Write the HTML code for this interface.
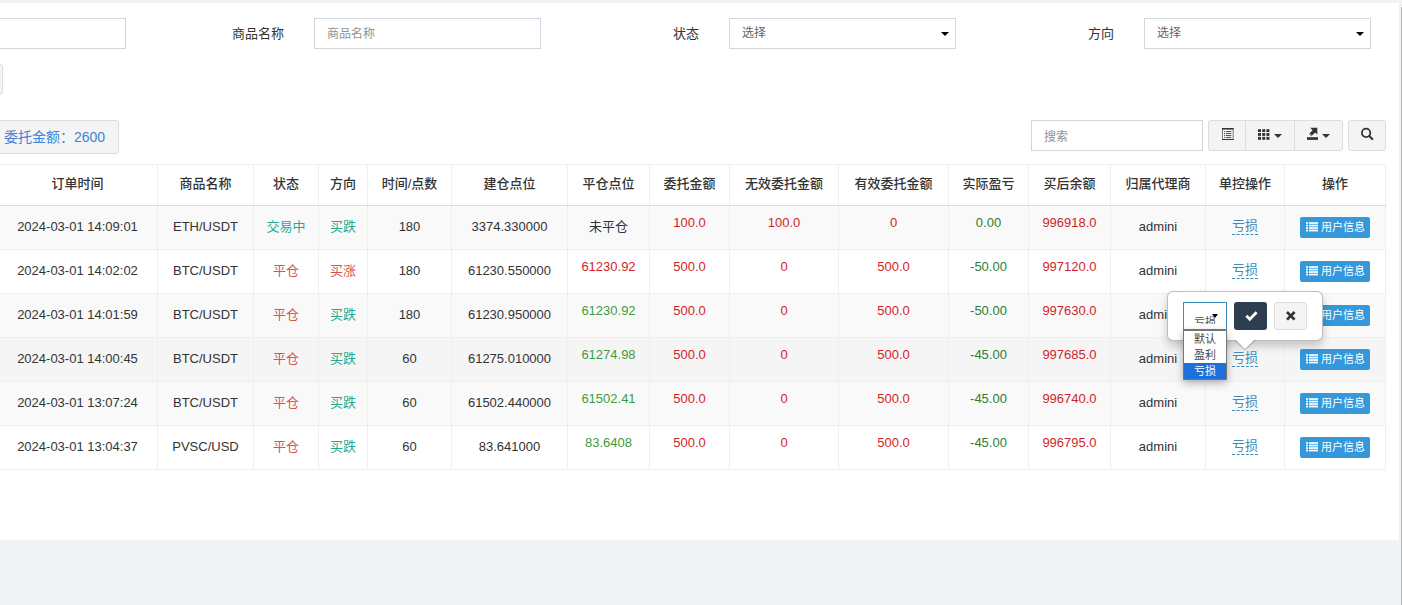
<!DOCTYPE html>
<html lang="zh-CN">
<head>
<meta charset="utf-8">
<title>订单列表</title>
<style>
*{box-sizing:border-box;margin:0;padding:0}
html,body{width:1402px;height:605px;overflow:hidden}
body{background:#eff3f6;font-family:"Liberation Sans","Noto Sans CJK SC",sans-serif;font-size:13px;color:#333;position:relative}
.abs{position:absolute}
#panel{left:0;top:3px;width:1399px;height:537px;background:#fff}
#sbtrack{left:1399px;top:0;width:3px;height:605px;background:#f1f1f1}
#sbthumb{left:1401px;top:7px;width:2px;height:598px;background:#b4b4b4}
.inp{height:31px;border:1px solid #d2d6de;background:#fff;border-radius:0;font-size:12px;color:#929292;line-height:29px;padding-left:12px}
.lbl{font-size:13px;line-height:20px;color:#333;white-space:nowrap}
.sel{color:#666}
.caret{position:absolute;width:0;height:0;border-left:3.5px solid transparent;border-right:3.5px solid transparent;border-top:4px solid #000}
.btn{background:#f4f4f4;border:1px solid #ddd;border-radius:3px}
/* table */
#tbl{left:-40px;top:164px;width:1425px;border-collapse:collapse;table-layout:fixed;font-size:13px}
#tbl th,#tbl td{border:1px solid #efefef;text-align:center;vertical-align:middle;white-space:nowrap;padding:0}
#tbl th{height:41px;padding-bottom:5px;font-weight:500;color:#333;border-bottom:1px solid #dcdcdc;font-size:13px}
#tbl td{height:44px;padding-bottom:2px;color:#333}
#tbl tr.odd td{background:#f9f9f9}
#tbl tr.hov td{background:#f5f5f5}
#tbl td.c{padding-bottom:5px}#tbl td.g{color:#1fa88e;padding-bottom:5px}#tbl td.r{color:#d9534f;padding-bottom:5px}
.up{display:block;position:relative;top:-4px}
.red{color:#d01f2a}.grn{color:#3c9d40}.dgrn{color:#2e7d32}
a.ed{color:#3c8dbc;border-bottom:1px dashed #3c8dbc;text-decoration:none;font-size:13px;line-height:16px;display:inline-block;position:relative;top:0}
.ub{display:inline-block;width:70px;height:21px;background:#3498db;border-radius:2px;color:#fff;font-size:11px;line-height:21px;vertical-align:middle;text-align:left;padding-left:21px;position:relative;top:1px}
.ub .li{position:absolute;left:6px;top:5px}

#pop{left:1167px;top:291px;width:156px;height:50px;background:#fff;border:1px solid rgba(0,0,0,.26);border-radius:6px;box-shadow:0 5px 10px rgba(0,0,0,.2)}
#poparrow{position:absolute;left:66px;top:48px;width:0;height:0;border-left:11px solid transparent;border-right:11px solid transparent;border-top:11px solid rgba(0,0,0,.16)}
#poparrow:after{content:"";position:absolute;left:-10px;top:-12px;width:0;height:0;border-left:10px solid transparent;border-right:10px solid transparent;border-top:10px solid #fff}
#psel{left:15px;top:10px;width:44px;height:28px;border:1px solid #3c8dbc;background:#fff;font-size:11px;color:#555}
#pclip{position:absolute;left:0;top:0;width:42px;height:21px;overflow:hidden}
#pseltxt{position:absolute;left:10px;top:10.5px;line-height:16px;white-space:nowrap}
#pok{left:66px;top:10px;width:33px;height:28px;background:#2c3e50;border-radius:3px}
#pcancel{left:106px;top:10px;width:33px;height:28px;background:#f4f4f4;border:1px solid #ddd;border-radius:3px}
#ddl{left:1183px;top:330px;width:44px;height:50px;background:#fff;border:1px solid #767676;font-size:11px;color:#444;box-shadow:0 3px 8px rgba(0,0,0,.3)}
#ddl div{height:16px;line-height:17px;padding-left:10px;white-space:nowrap}
#ddl .hl{background:#1e6fd9;color:#fff}
</style>
</head>
<body>
<div id="panel" class="abs"></div>
<div id="sbtrack" class="abs"></div>
<div id="sbthumb" class="abs"></div>

<!-- filter row -->
<div class="abs inp" style="left:-100px;top:18px;width:226px"></div>
<div class="abs lbl" style="left:232px;top:23.6px">商品名称</div>
<div class="abs inp" style="left:314px;top:18px;width:227px;line-height:31px">商品名称</div>
<div class="abs lbl" style="left:673px;top:23.6px">状态</div>
<div class="abs inp sel" style="left:729px;top:18px;width:227px">选择<i class="caret" style="right:6.5px;top:13px;border-left-width:4px;border-right-width:4px;border-top-width:4.5px"></i></div>
<div class="abs lbl" style="left:1088px;top:23.6px">方向</div>
<div class="abs inp sel" style="left:1144px;top:18px;width:227px">选择<i class="caret" style="right:6.5px;top:13px;border-left-width:4px;border-right-width:4px;border-top-width:4.5px"></i></div>

<div class="abs btn" style="left:-40px;top:64px;width:43px;height:31px"></div>

<!-- toolbar -->
<div class="abs btn" style="left:-40px;top:120px;width:159px;height:34px;color:#3d85d8;font-size:14px;line-height:32px;padding-left:43px;white-space:nowrap">委托金额：2600</div>
<div class="abs inp" style="left:1031px;top:120px;width:172px;line-height:32px">搜索</div>
<div class="abs btn" style="left:1208px;top:120px;width:135px;height:31px"></div>
<div class="abs" style="left:1245px;top:120px;width:1px;height:31px;background:#ddd"></div>
<div class="abs" style="left:1294px;top:120px;width:1px;height:31px;background:#ddd"></div>
<div class="abs btn" style="left:1348px;top:120px;width:38px;height:31px"></div>


<!-- toolbar icons -->
<svg class="abs" style="left:1222px;top:128px" width="12" height="12" viewBox="0 0 12 12"><rect x="0.4" y="0.4" width="10.7" height="11.2" fill="#fdfdfd" stroke="#555" stroke-width="0.8"/><rect x="0" y="0" width="11.5" height="1.6" fill="#333"/><rect x="0" y="11" width="11.5" height="1" fill="#333"/><g fill="#333"><rect x="2" y="3.2" width="1" height="0.9"/><rect x="3.8" y="3.2" width="5.6" height="0.9"/><rect x="2" y="5.2" width="1" height="0.9"/><rect x="3.8" y="5.2" width="5.6" height="0.9"/><rect x="2" y="7.2" width="1" height="0.9"/><rect x="3.8" y="7.2" width="5.6" height="0.9"/><rect x="2" y="9.2" width="1" height="0.9"/><rect x="3.8" y="9.2" width="5.6" height="0.9"/></g></svg>
<svg class="abs" style="left:1258px;top:129px" width="12" height="11" viewBox="0 0 12 11"><g fill="#333"><rect x="0" y="0.2" width="3" height="2.8"/><rect x="4.2" y="0.2" width="3" height="2.8"/><rect x="8.4" y="0.2" width="3" height="2.8"/><rect x="0" y="4" width="3" height="2.9"/><rect x="4.2" y="4" width="3" height="2.9"/><rect x="8.4" y="4" width="3" height="2.9"/><rect x="0" y="7.9" width="3" height="2.9"/><rect x="4.2" y="7.9" width="3" height="2.9"/><rect x="8.4" y="7.9" width="3" height="2.9"/></g></svg>
<i class="caret" style="left:1274px;top:134px;border-left-width:4px;border-right-width:4px;border-top-color:#333"></i>
<svg class="abs" style="left:1306px;top:127px" width="13" height="14" viewBox="0 0 13 14"><g fill="#333"><rect x="1" y="10.2" width="11" height="2.7"/><path d="M4.2 0.8 L11.3 0.8 L11.3 7.6 L9.2 5.5 L5.2 9.2 L3 7 L6.6 3.2 Z"/></g><path d="M3.4 6.6 L5.4 8.6" stroke="#f4f4f4" stroke-width="1"/></svg>
<i class="caret" style="left:1322px;top:134px;border-left-width:4px;border-right-width:4px;border-top-color:#333"></i>
<svg class="abs" style="left:1360px;top:127px" width="14" height="14" viewBox="0 0 14 14"><circle cx="6.1" cy="5.9" r="4.2" fill="none" stroke="#333" stroke-width="1.8"/><path d="M9.2 9 L12.3 12.1" stroke="#333" stroke-width="2.1" stroke-linecap="round"/></svg>

<!-- table -->
<table id="tbl" class="abs">
<colgroup>
<col style="width:197px"><col style="width:96px"><col style="width:65px"><col style="width:49px"><col style="width:84px"><col style="width:116px"><col style="width:82px"><col style="width:80px"><col style="width:109px"><col style="width:110px"><col style="width:80px"><col style="width:82px"><col style="width:95px"><col style="width:79px"><col style="width:101px">
</colgroup>
<thead><tr>
<th style="padding-left:37px">订单时间</th><th>商品名称</th><th>状态</th><th>方向</th><th>时间/点数</th><th>建仓点位</th><th>平仓点位</th><th>委托金额</th><th>无效委托金额</th><th>有效委托金额</th><th>实际盈亏</th><th>买后余额</th><th>归属代理商</th><th>单控操作</th><th>操作</th>
</tr></thead>
<tbody>
<tr class="odd"><td style="padding-left:37px">2024-03-01 14:09:01</td><td>ETH/USDT</td><td class="g">交易中</td><td class="g">买跌</td><td>180</td><td>3374.330000</td><td class="c">未平仓</td><td><span class="up red">100.0</span></td><td><span class="up red">100.0</span></td><td><span class="up red">0</span></td><td><span class="up dgrn">0.00</span></td><td><span class="up red">996918.0</span></td><td>admini</td><td><a class="ed">亏损</a></td><td><span class="ub"><svg class="li" width="12" height="10" viewBox="0 0 12 10"><g fill="#fff"><rect x="0" y="0.2" width="2" height="1.7"/><rect x="2.9" y="0.2" width="9.1" height="1.7"/><rect x="0" y="2.7" width="2" height="1.7"/><rect x="2.9" y="2.7" width="9.1" height="1.7"/><rect x="0" y="5.2" width="2" height="1.7"/><rect x="2.9" y="5.2" width="9.1" height="1.7"/><rect x="0" y="7.7" width="2" height="1.7"/><rect x="2.9" y="7.7" width="9.1" height="1.7"/></g></svg>用户信息</span></td></tr>
<tr><td style="padding-left:37px">2024-03-01 14:02:02</td><td>BTC/USDT</td><td class="r">平仓</td><td class="r">买涨</td><td>180</td><td>61230.550000</td><td><span class="up red">61230.92</span></td><td><span class="up red">500.0</span></td><td><span class="up red">0</span></td><td><span class="up red">500.0</span></td><td><span class="up dgrn">-50.00</span></td><td><span class="up red">997120.0</span></td><td>admini</td><td><a class="ed">亏损</a></td><td><span class="ub"><svg class="li" width="12" height="10" viewBox="0 0 12 10"><g fill="#fff"><rect x="0" y="0.2" width="2" height="1.7"/><rect x="2.9" y="0.2" width="9.1" height="1.7"/><rect x="0" y="2.7" width="2" height="1.7"/><rect x="2.9" y="2.7" width="9.1" height="1.7"/><rect x="0" y="5.2" width="2" height="1.7"/><rect x="2.9" y="5.2" width="9.1" height="1.7"/><rect x="0" y="7.7" width="2" height="1.7"/><rect x="2.9" y="7.7" width="9.1" height="1.7"/></g></svg>用户信息</span></td></tr>
<tr class="odd"><td style="padding-left:37px">2024-03-01 14:01:59</td><td>BTC/USDT</td><td class="r">平仓</td><td class="g">买跌</td><td>180</td><td>61230.950000</td><td><span class="up grn">61230.92</span></td><td><span class="up red">500.0</span></td><td><span class="up red">0</span></td><td><span class="up red">500.0</span></td><td><span class="up dgrn">-50.00</span></td><td><span class="up red">997630.0</span></td><td>admini</td><td><a class="ed">亏损</a></td><td><span class="ub"><svg class="li" width="12" height="10" viewBox="0 0 12 10"><g fill="#fff"><rect x="0" y="0.2" width="2" height="1.7"/><rect x="2.9" y="0.2" width="9.1" height="1.7"/><rect x="0" y="2.7" width="2" height="1.7"/><rect x="2.9" y="2.7" width="9.1" height="1.7"/><rect x="0" y="5.2" width="2" height="1.7"/><rect x="2.9" y="5.2" width="9.1" height="1.7"/><rect x="0" y="7.7" width="2" height="1.7"/><rect x="2.9" y="7.7" width="9.1" height="1.7"/></g></svg>用户信息</span></td></tr>
<tr class="hov"><td style="padding-left:37px">2024-03-01 14:00:45</td><td>BTC/USDT</td><td class="r">平仓</td><td class="g">买跌</td><td>60</td><td>61275.010000</td><td><span class="up grn">61274.98</span></td><td><span class="up red">500.0</span></td><td><span class="up red">0</span></td><td><span class="up red">500.0</span></td><td><span class="up dgrn">-45.00</span></td><td><span class="up red">997685.0</span></td><td>admini</td><td><a class="ed">亏损</a></td><td><span class="ub"><svg class="li" width="12" height="10" viewBox="0 0 12 10"><g fill="#fff"><rect x="0" y="0.2" width="2" height="1.7"/><rect x="2.9" y="0.2" width="9.1" height="1.7"/><rect x="0" y="2.7" width="2" height="1.7"/><rect x="2.9" y="2.7" width="9.1" height="1.7"/><rect x="0" y="5.2" width="2" height="1.7"/><rect x="2.9" y="5.2" width="9.1" height="1.7"/><rect x="0" y="7.7" width="2" height="1.7"/><rect x="2.9" y="7.7" width="9.1" height="1.7"/></g></svg>用户信息</span></td></tr>
<tr class="odd"><td style="padding-left:37px">2024-03-01 13:07:24</td><td>BTC/USDT</td><td class="r">平仓</td><td class="g">买跌</td><td>60</td><td>61502.440000</td><td><span class="up grn">61502.41</span></td><td><span class="up red">500.0</span></td><td><span class="up red">0</span></td><td><span class="up red">500.0</span></td><td><span class="up dgrn">-45.00</span></td><td><span class="up red">996740.0</span></td><td>admini</td><td><a class="ed">亏损</a></td><td><span class="ub"><svg class="li" width="12" height="10" viewBox="0 0 12 10"><g fill="#fff"><rect x="0" y="0.2" width="2" height="1.7"/><rect x="2.9" y="0.2" width="9.1" height="1.7"/><rect x="0" y="2.7" width="2" height="1.7"/><rect x="2.9" y="2.7" width="9.1" height="1.7"/><rect x="0" y="5.2" width="2" height="1.7"/><rect x="2.9" y="5.2" width="9.1" height="1.7"/><rect x="0" y="7.7" width="2" height="1.7"/><rect x="2.9" y="7.7" width="9.1" height="1.7"/></g></svg>用户信息</span></td></tr>
<tr><td style="padding-left:37px">2024-03-01 13:04:37</td><td>PVSC/USD</td><td class="r">平仓</td><td class="g">买跌</td><td>60</td><td>83.641000</td><td><span class="up grn">83.6408</span></td><td><span class="up red">500.0</span></td><td><span class="up red">0</span></td><td><span class="up red">500.0</span></td><td><span class="up dgrn">-45.00</span></td><td><span class="up red">996795.0</span></td><td>admini</td><td><a class="ed">亏损</a></td><td><span class="ub"><svg class="li" width="12" height="10" viewBox="0 0 12 10"><g fill="#fff"><rect x="0" y="0.2" width="2" height="1.7"/><rect x="2.9" y="0.2" width="9.1" height="1.7"/><rect x="0" y="2.7" width="2" height="1.7"/><rect x="2.9" y="2.7" width="9.1" height="1.7"/><rect x="0" y="5.2" width="2" height="1.7"/><rect x="2.9" y="5.2" width="9.1" height="1.7"/><rect x="0" y="7.7" width="2" height="1.7"/><rect x="2.9" y="7.7" width="9.1" height="1.7"/></g></svg>用户信息</span></td></tr>
</tbody>
</table>

<!-- popover -->
<div id="pop" class="abs">
 <div id="poparrow"></div>
 <div class="abs" id="psel"><div id="pclip"><span id="pseltxt">亏损</span></div><i class="caret" style="left:28px;top:11px;border-left-width:3.5px;border-right-width:3.5px;border-top-width:4px"></i></div>
 <div class="abs" id="pok"><svg width="15" height="12.9" viewBox="0 0 14 12" style="position:absolute;left:9.6px;top:7.6px"><path d="M1.3 6.4 L3.2 4.5 L5.4 6.7 L10.8 1.2 L12.7 3.1 L5.4 10.5 Z" fill="#fff"/></svg></div>
 <div class="abs" id="pcancel"><svg width="12" height="12" viewBox="0 0 12 12" style="position:absolute;left:10px;top:7px"><path d="M2 2 L9.6 9.6 M9.6 2 L2 9.6" stroke="#333" stroke-width="2.7" stroke-linecap="butt"/></svg></div>
</div>
<div id="ddl" class="abs"><div>默认</div><div>盈利</div><div class="hl">亏损</div></div>
</body>
</html>
